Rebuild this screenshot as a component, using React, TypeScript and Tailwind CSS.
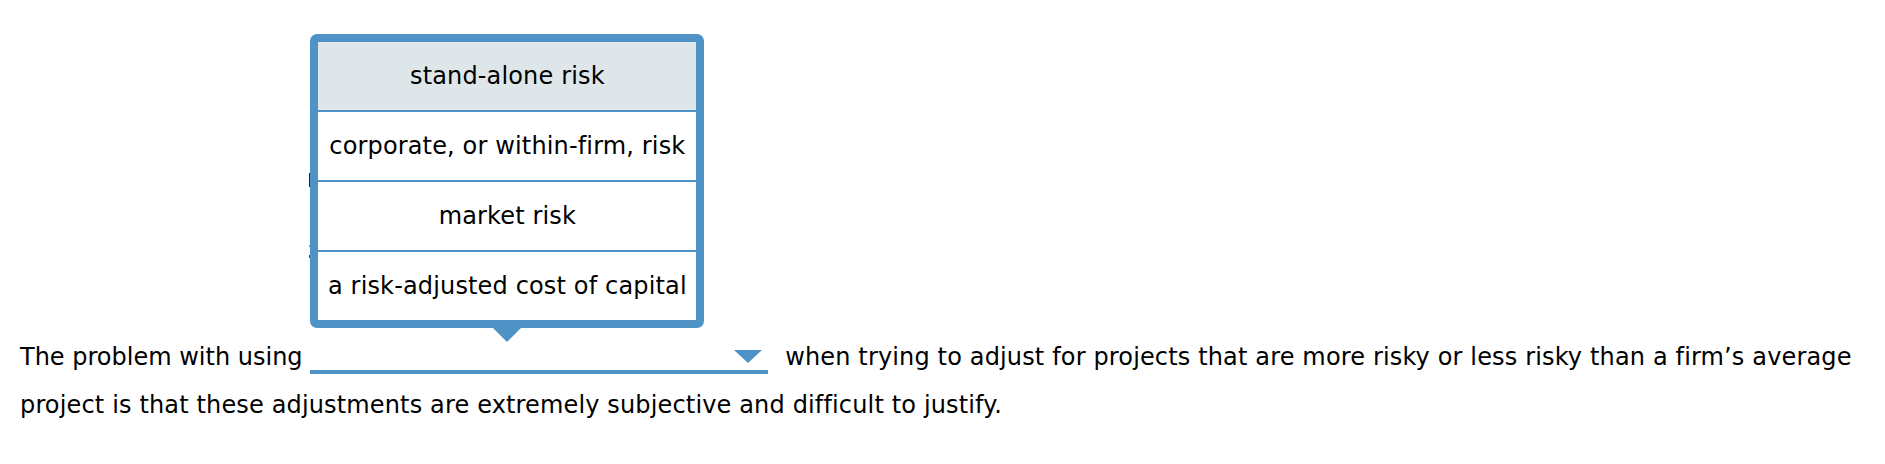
import React from "react";

const options = [
  "stand-alone risk",
  "corporate, or within-firm, risk",
  "market risk",
  "a risk-adjusted cost of capital",
];

const BLUE = "#4f93c6";

const OptionList = ({ selected }: { selected: number }) => (
  <div className="absolute left-0 bottom-[calc(100%+16px)] z-10 w-[394px] rounded-[7px] border-[8px] border-[#4f93c6] bg-white">
    <ul className="flex flex-col">
      {options.map((opt, i) => (
        <li
          key={opt}
          className={`flex items-center justify-center whitespace-nowrap text-[24px] leading-none text-black ${
            i > 0 ? "h-[70px] border-t-2 border-[#4f93c6]" : "h-[68px]"
          } ${i === selected ? "bg-[#dee6e9]" : "bg-white"}`}
        >
          {opt}
        </li>
      ))}
    </ul>
    {/* pointer hanging under the list, aimed at the select */}
    <svg
      className="absolute left-[175px] top-[calc(100%+8px)]"
      width="28"
      height="14"
      viewBox="0 0 28 14"
    >
      <polygon points="0,0 28,0 14,14" fill={BLUE} />
    </svg>
  </div>
);

export default function App() {
  return (
    <div
      className="min-h-screen bg-white pl-5 pr-4 tracking-[0.15px] text-black"
      style={{ fontFamily: "Verdana, 'DejaVu Sans', sans-serif" }}
    >
      {/* earlier question lines, only their edges show beside the open list */}
      <div className="flex h-[333px] flex-col items-start pl-[289px] pt-[173px]">
        <span className="h-[14px] w-[2px] bg-[#222]" />
        <span className="mt-[58px] h-[2px] w-[2px] bg-[#999]" />
        <span className="mt-[8px] h-[3px] w-[2px] bg-[#444]" />
      </div>

      <p className="text-[24px] leading-[48px]">
        <span className="tracking-normal">The problem with using</span>{" "}
        <span className="relative mr-[9px] inline-block h-[30px] w-[458px] border-b-4 border-[#4f93c6] align-[-9px]">
          <OptionList selected={0} />
          <svg
            className="absolute right-[6px] top-[6px]"
            width="28"
            height="13"
            viewBox="0 0 28 13"
          >
            <polygon points="0,0 28,0 14,13" fill={BLUE} />
          </svg>
        </span>{" "}
        when trying to adjust for projects that are more risky or less risky
        than a firm’s average project is that these adjustments are extremely
        subjective and difficult to justify.
      </p>
    </div>
  );
}
